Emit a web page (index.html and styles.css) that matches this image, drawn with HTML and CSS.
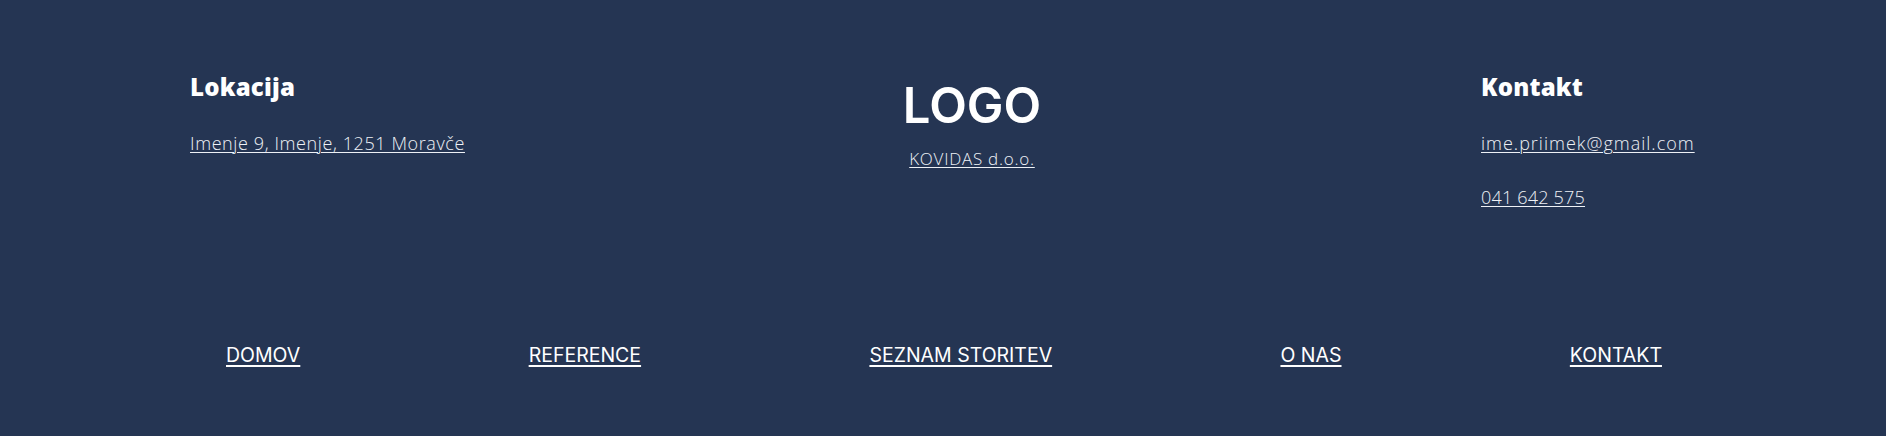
FILE: index.html
```html
<!DOCTYPE html>
<html lang="sl">
<head>
<meta charset="utf-8">
<title>Footer</title>
<link rel="stylesheet" href="styles.css">
</head>
<body>
<footer class="footer">
  <div class="top">
    <div class="col col-left">
      <h3 class="col-title">Lokacija</h3>
      <a class="link" href="#">Imenje 9, Imenje, 1251 Moravče</a>
    </div>
    <div class="col col-center">
      <div class="logo">LOGO</div>
      <a class="link link-company" href="#">KOVIDAS d.o.o.</a>
    </div>
    <div class="col col-right">
      <h3 class="col-title">Kontakt</h3>
      <a class="link link-email" href="#">ime.priimek@gmail.com</a>
      <a class="link link-phone" href="#">041 642 575</a>
    </div>
  </div>
  <nav class="nav">
    <a class="nav-link" href="#">DOMOV</a>
    <a class="nav-link" href="#">REFERENCE</a>
    <a class="nav-link" href="#">SEZNAM STORITEV</a>
    <a class="nav-link" href="#">O NAS</a>
    <a class="nav-link" href="#">KONTAKT</a>
  </nav>
</footer>
</body>
</html>
```
FILE: styles.css
```css
html, body {
  margin: 0;
  padding: 0;
  background: #253553;
}
body {
  font-family: Inter, "Open Sans", "Liberation Sans", sans-serif;
  color: #ffffff;
  height: 436px;
  overflow: hidden;
}
.footer {
  background: #253553;
  height: 436px;
  box-sizing: border-box;
  padding-top: 69px;
}
.top {
  display: grid;
  grid-template-columns: 273px 135px 217px;
  justify-content: space-between;
  padding: 0 188px 0 190px;
}
.col {
  display: flex;
  flex-direction: column;
  align-items: flex-start;
}
.col-center {
  align-items: center;
}
.col-title {
  margin: 0 0 25px;
  font-family: "Open Sans", Inter, sans-serif;
  font-size: 24px;
  font-weight: 800;
  letter-spacing: 0.2px;
  line-height: 36px;
  height: 36px;
  white-space: nowrap;
}
.link {
  font-family: "Open Sans", Inter, sans-serif;
  color: #eef1f6;
  font-size: 18px;
  font-weight: 300;
  letter-spacing: 0.6px;
  line-height: 27px;
  margin-bottom: 27px;
  text-decoration: underline;
  text-decoration-thickness: 1px;
  text-underline-offset: 2px;
  white-space: nowrap;
}
.link-email {
  letter-spacing: 1px;
}
.link-phone {
  letter-spacing: 0.2px;
}
.logo {
  font-size: 49px;
  font-weight: 600;
  line-height: 60px;
  margin: 7px 0 9px;
  white-space: nowrap;
}
.link-company {
  font-size: 17px;
  letter-spacing: 0.75px;
}
.nav {
  display: flex;
  justify-content: space-between;
  padding: 0 224px 0 226px;
  margin-top: 102px;
}
.nav-link {
  color: #ffffff;
  font-size: 19.5px;
  font-weight: 400;
  line-height: 30px;
  text-decoration: underline;
  text-decoration-thickness: 2px;
  text-underline-offset: 3px;
  white-space: nowrap;
}
```
